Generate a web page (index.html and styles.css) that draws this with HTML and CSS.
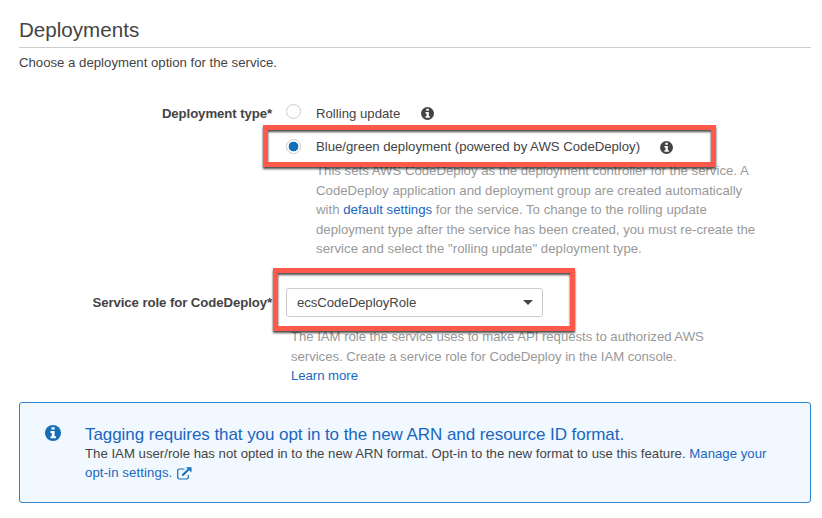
FILE: index.html
```
<!DOCTYPE html>
<html lang="en">
<head>
<meta charset="utf-8">
<title>Deployments</title>
<link rel="stylesheet" href="styles.css">
</head>
<body>
<svg class="defs" width="0" height="0" aria-hidden="true">
  <symbol id="info" viewBox="0 0 12 12">
    <circle cx="6" cy="6" r="6" fill="currentColor"/>
    <path d="M4.9 1.6h2.3v1.8H4.9zM4.1 4.5h3.1v4h1V10H4.1V8.5h1V6h-1z" fill="#fff"/>
  </symbol>
</svg>
<main class="page">
  <h1 class="title">Deployments</h1>
  <p class="intro">Choose a deployment option for the service.</p>

  <div class="row type-row">
    <div class="label">Deployment type*</div>
    <div class="field">
      <label class="option"><span class="radio"></span><span>Rolling update</span><svg class="info"><use href="#info"/></svg></label>
      <label class="option second"><span class="radio checked"></span><span class="tight">Blue/green deployment (powered by AWS CodeDeploy)</span><svg class="info low"><use href="#info"/></svg><span class="highlight highlight-option"></span></label>
      <p class="help type-help">
        <span class="line">This sets AWS CodeDeploy as the deployment controller for the service. A</span>
        <span class="line loose">CodeDeploy application and deployment group are created automatically</span>
        <span class="line loose">with <a>default settings</a> for the service. To change to the rolling update</span>
        <span class="line">deployment type after the service has been created, you must re-create the</span>
        <span class="line looser">service and select the "rolling update" deployment type.</span>
      </p>
    </div>
  </div>

  <div class="row role-row">
    <div class="label role-label">Service role for CodeDeploy*</div>
    <div class="field">
      <div class="select"><span class="select-value">ecsCodeDeployRole</span><span class="caret"></span><span class="highlight highlight-select"></span></div>
      <p class="help role-help">
        <span class="line">The IAM role the service uses to make API requests to authorized AWS</span>
        <span class="line">services. Create a service role for CodeDeploy in the IAM console.</span>
        <span class="line"><a>Learn more</a></span>
      </p>
    </div>
  </div>

  <section class="notice">
    <svg class="notice-icon"><use href="#info"/></svg>
    <div class="notice-body">
      <h2 class="notice-title">Tagging requires that you opt in to the new ARN and resource ID format.</h2>
      <p class="notice-text">
        <span class="line">The IAM user/role has not opted in to the new ARN format. Opt-in to the new format to use this feature. <a>Manage your</a></span>
        <span class="line"><a class="settings">opt-in settings.</a><svg class="external" viewBox="0 0 15 13"><path d="M7.5 2H2.6Q.7 2 .7 3.9v6.2q0 1.9 1.9 1.9h6.8q1.9 0 1.9-1.9V8" fill="none" stroke="currentColor" stroke-width="1.2"/><path d="M5.3 8.5 11.5 2.5" stroke="currentColor" stroke-width="2"/><path d="M9 .3h5.5v5.3z" fill="currentColor"/></svg></span>
      </p>
    </div>
  </section>
</main>
</body>
</html>
```
FILE: styles.css
```
* { box-sizing: border-box; }
body {
  margin: 0;
  background: #fff;
  color: #444;
  font: 13.2px/19.6px "Liberation Sans", Arial, sans-serif;
}
h1, h2, p { margin: 0; font-weight: 400; }
a { color: #1a66bf; }
.defs { position: absolute; }
.page { width: 822px; height: 518px; padding: 15px 11px 0 19px; overflow: hidden; }
.title { height: 33px; border-bottom: 1px solid #ccc; font-size: 20.6px; line-height: 30px; }
.intro { height: 51px; padding-top: 5px; }
.row { display: flex; }
.type-row { padding-top: 5px; }
.label {
  width: 253px; flex: none; text-align: right;
  font-weight: 700; letter-spacing: -.08px; white-space: nowrap;
}
.field { margin-left: 14px; flex: 1; }
.option { position: relative; display: flex; height: 20px; white-space: nowrap; }
.second { margin-top: 13px; }
.radio {
  width: 15px; height: 15px; margin: 0 15px 0 0; flex: none;
  border: 1px solid #ccc; border-radius: 50%;
}
.checked { margin-top: 2px; background: radial-gradient(circle, #146eb8 4.5px, transparent 5.2px); }
.info { width: 13px; height: 13px; margin: 3px 0 0 21px; color: #444; }
.low { margin: 4px 0 0 20px; }
.tight { letter-spacing: -.02px; }
.highlight {
  position: absolute;
  border: 5px solid #ff594b;
  filter: drop-shadow(0 2px 1px rgba(0, 0, 0, .7));
}
.highlight-option { left: -23px; top: -12px; width: 453px; height: 42px; }
.help { color: #999; }
.type-help { padding: 4px 0 0 30px; }
.line { display: block; white-space: nowrap; }
.loose { letter-spacing: .015px; }
.looser { letter-spacing: .035px; }
.role-row { margin-top: 29px; }
.role-label { padding-top: 5px; }
.select {
  position: relative; display: flex; justify-content: space-between; align-items: center;
  width: 257px; height: 29px; padding: 0 9px 0 10px;
  border: 1px solid #ccc; border-radius: 3px;
}
.select-value { letter-spacing: -.06px; }
.caret { border: 5px solid transparent; border-top-color: #444; border-bottom: 0; }
.highlight-select { left: -14px; top: -21px; width: 302px; height: 63px; }
.role-help { padding: 10px 0 0 5px; letter-spacing: -.045px; }
.notice {
  display: flex; width: 792px; height: 101px; margin-top: 16px; padding: 22px 0 0 25px;
  border: 1px solid #3184cc; border-radius: 3px; background: #f1f8ff;
}
.notice-icon { width: 16px; height: 16px; flex: none; color: #146eb8; }
.notice-body { margin-left: 24px; }
.notice-title { color: #1a66bf; font-size: 17px; line-height: 19px; letter-spacing: -.06px; white-space: nowrap; }
.notice-text { letter-spacing: .01px; }
.settings { letter-spacing: .1px; }
.external { width: 15px; height: 13px; margin-left: 5px; vertical-align: -3px; color: #146eb8; }
```
